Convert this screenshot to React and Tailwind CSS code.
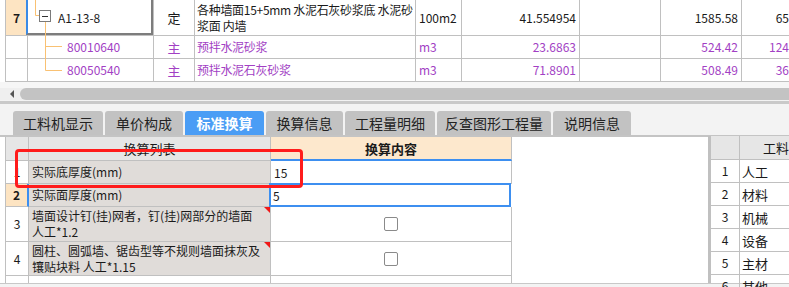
import React from "react";

const line = "border-[#c0c0c0]";
const purple = "text-[#a23fc4]";

function TopRow({ h, code, codePad, kind, name, unit, qty, price, extra, num, first, color }) {
  return (
    <div className={`flex border-b ${line} ${h}`}>
      <div className={`w-[22px] shrink-0 border-r ${line} flex items-center justify-center ${first ? "bg-[#fde4c2] font-bold" : "bg-white"}`}>
        {num}
      </div>
      <div className={`w-[126px] shrink-0 border-r ${line} flex items-center ${codePad} ${color}`}>{code}</div>
      <div className={`w-[41px] shrink-0 border-r ${line} flex items-center justify-center text-[13px] ${color}`}>{kind}</div>
      <div className={`w-[221px] shrink-0 border-r ${line} flex items-center pl-[2px] leading-[16px] whitespace-nowrap overflow-hidden tracking-[-0.3px] ${color}`}>{name}</div>
      <div className={`w-[46px] shrink-0 border-r ${line} flex items-center pl-[3px] ${color}`}>{unit}</div>
      <div className={`w-[118px] shrink-0 border-r ${line} flex items-center justify-end pr-[3px] ${color}`}>{qty}</div>
      <div className={`w-[81px] shrink-0 border-r ${line}`} />
      <div className={`w-[81px] shrink-0 border-r ${line} flex items-center justify-end pr-[3px] ${color}`}>{price}</div>
      <div className={`flex-1 flex items-center justify-end whitespace-nowrap overflow-hidden ${color}`}>{extra}</div>
    </div>
  );
}

function Tab({ w, label, active }) {
  return (
    <div
      className={`${w} h-[24px] shrink-0 rounded-t-[3px] flex items-center justify-center text-[14px] ${
        active ? "bg-[#4a9df5] text-white font-bold" : "bg-[#c2c2c2] text-[#222]"
      }`}
    >
      {label}
    </div>
  );
}

function Corner() {
  return <div className="absolute right-0 top-0 w-0 h-0 border-t-[6px] border-t-[#f01818] border-l-[6px] border-l-transparent" />;
}

function Check() {
  return <div className="w-[14px] h-[14px] rounded-[2px] border border-[#8a8a8a] bg-white" />;
}

export default function App() {
  return (
    <div className="w-[789px] h-[287px] overflow-hidden bg-[#f3f3f3] relative text-[12px] text-[#1a1a1a] font-['Noto_Sans_CJK_SC',sans-serif] leading-none">
      {/* top grid */}
      <div className="relative bg-white">
        <div className={`ml-[5px] border-l ${line}`}>
          <TopRow
            h="h-[36px]"
            num="7"
            first
            code="A1-13-8"
            codePad="pl-[30px]"
            kind="定"
            name={<div><div>各种墙面15+5mm 水泥石灰砂浆底 水泥砂</div><div>浆面 内墙</div></div>}
            unit="100m2"
            qty="41.554954"
            price="1585.58"
            extra="65"
            color="text-[#1a1a1a]"
          />
          <TopRow
            h="h-[23px]"
            code="80010640"
            codePad="pl-[39px]"
            kind="主"
            name="预拌水泥砂浆"
            unit="m3"
            qty="23.6863"
            price="524.42"
            extra="124"
            color={purple}
          />
          <TopRow
            h="h-[23px]"
            code="80050540"
            codePad="pl-[39px]"
            kind="主"
            name="预拌水泥石灰砂浆"
            unit="m3"
            qty="71.8901"
            price="508.49"
            extra="36"
            color={purple}
          />
        </div>
        {/* selected cell frame */}
        <div className="absolute left-[26px] top-[-2px] w-[127px] h-[37px] border-2 border-[#7d7d7d] border-l-[#3a8ae6] pointer-events-none" />
        {/* tree connectors */}
        <svg className="absolute left-0 top-0 pointer-events-none" width="80" height="82">
          <path d="M35.5 0V15.5H40M45.5 22V70.5M45.5 46.5H62M45.5 70.5H62" stroke="#f9c173" fill="none" />
          <rect x="39.5" y="10.5" width="11" height="11" fill="#fff" stroke="#7a7a7a" />
          <path d="M42 16.5H48" stroke="#333" />
        </svg>
      </div>

      {/* horizontal scrollbar */}
      <div className="h-[6px] bg-[#f6f6f6]" />
      <div className="h-[12px] flex items-center bg-[#efefef]">
        <div className="w-[10px]" />
        <div className="w-0 h-0 border-y-[4px] border-y-transparent border-r-[4px] border-r-[#555]" />
        <div className="ml-[6px] flex-1 h-[12px] rounded-l-full bg-[#c3c3c3]" />
      </div>
      <div className="h-[1px] bg-[#f3f3f3]" />
      <div className="h-[3px] bg-[#c9c9c9]" />

      {/* tabs */}
      <div className="mt-[7px] ml-[13px] flex gap-[2px]">
        <Tab w="w-[90px]" label="工料机显示" />
        <Tab w="w-[78px]" label="单价构成" />
        <Tab w="w-[79px]" label="标准换算" active />
        <Tab w="w-[77px]" label="换算信息" />
        <Tab w="w-[90px]" label="工程量明细" />
        <Tab w="w-[114px]" label="反查图形工程量" />
        <Tab w="w-[78px]" label="说明信息" />
      </div>
      <div className="h-[2px] bg-[#c4c4c4]" />

      {/* lower panel */}
      <div className="relative flex h-[146px] bg-white">
        {/* conversion table */}
        <div className={`ml-[5px] border-l ${line} w-[507px] shrink-0`}>
          <div className="flex h-[24px]">
            <div className={`w-[23px] shrink-0 border-r border-b ${line} bg-[#e6e6e6]`} />
            <div className={`w-[242px] shrink-0 border-r border-b ${line} bg-[#e6e6e6] flex items-center justify-center text-[13px]`}>
              换算列表
            </div>
            <div className={`w-[241px] shrink-0 border-r ${line} border-b-2 border-b-[#3d8ff0] bg-[#fde8cd] flex items-center justify-center text-[13px] font-bold`}>
              换算内容
            </div>
          </div>
          <div className="flex h-[23px]">
            <div className={`w-[23px] shrink-0 border-r border-b ${line} flex items-center justify-center`}>1</div>
            <div className={`w-[242px] shrink-0 border-r border-b ${line} bg-[#e0dcd9] flex items-center pl-[3px]`}>实际底厚度(mm)</div>
            <div className={`w-[241px] shrink-0 border-r ${line} flex items-center pl-[3px]`}>15</div>
          </div>
          <div className="flex h-[23px]">
            <div className={`w-[23px] shrink-0 border-r-2 border-r-[#3d8ff0] border-b ${line} bg-[#fde4c2] flex items-center justify-center font-bold`}>2</div>
            <div className={`w-[241px] shrink-0 border-r border-b ${line} bg-[#e0dcd9] flex items-center pl-[3px]`}>实际面厚度(mm)</div>
            <div className="relative w-[241px] shrink-0 flex items-center pl-[3px]">
              <div className="absolute left-[-1px] top-[-1px] right-0 bottom-0 border-2 border-[#3d8ff0]" />
              5
            </div>
          </div>
          <div className="flex h-[35px]">
            <div className={`w-[23px] shrink-0 border-r border-b ${line} flex items-center justify-center`}>3</div>
            <div className={`relative w-[242px] shrink-0 border-r border-b ${line} bg-[#e0dcd9] flex flex-col justify-center pl-[3px] leading-[16px]`}>
              <div>墙面设计钉(挂)网者，钉(挂)网部分的墙面</div>
              <div>人工*1.2</div>
              <Corner />
            </div>
            <div className={`w-[241px] shrink-0 border-r border-b ${line} flex items-center justify-end pr-[113px]`}>
              <Check />
            </div>
          </div>
          <div className="flex h-[34px]">
            <div className={`w-[23px] shrink-0 border-r border-b ${line} flex items-center justify-center`}>4</div>
            <div className={`relative w-[242px] shrink-0 border-r border-b ${line} bg-[#e0dcd9] flex flex-col justify-center pl-[3px] leading-[16px]`}>
              <div>圆柱、圆弧墙、锯齿型等不规则墙面抹灰及</div>
              <div>镶贴块料 人工*1.15</div>
              <Corner />
            </div>
            <div className={`w-[241px] shrink-0 border-r border-b ${line} flex items-center justify-end pr-[113px]`}>
              <Check />
            </div>
          </div>
          <div className="flex h-[7px]">
            <div className={`w-[23px] shrink-0 border-r ${line}`} />
            <div className={`w-[242px] shrink-0 border-r ${line}`} />
            <div className={`w-[241px] shrink-0 border-r ${line}`} />
          </div>
        </div>

        <div className="flex-1" />
        <div className="w-[3px] shrink-0 bg-[#c0c0c0] mt-[-1px]" />

        {/* resource summary */}
        <div className="w-[78px] shrink-0 mt-[-1px]">
          <div className="flex h-[24px]">
            <div className={`w-[29px] shrink-0 border-r border-b ${line} bg-[#e6e6e6]`} />
            <div className={`flex-1 border-b ${line} bg-[#e6e6e6] flex items-center pl-[23px] whitespace-nowrap overflow-hidden text-[13px]`}>工料机类别</div>
          </div>
          {["人工", "材料", "机械", "设备", "主材", "其他"].map((t, i) => (
            <div key={t} className="flex h-[23px]">
              <div className={`w-[29px] shrink-0 border-r border-b ${line} flex items-center justify-center`}>{i + 1}</div>
              <div className={`flex-1 border-b ${line} flex items-center pl-[2px] text-[13px]`}>{t}</div>
            </div>
          ))}
        </div>

        {/* annotation */}
        <div className="absolute left-[15px] top-[12px] w-[288px] h-[39px] border-[3px] border-[#ff1c1c] rounded-[4px] pointer-events-none" />
      </div>
      <div className="h-[1px] bg-[#c8c8c8]" />
    </div>
  );
}
